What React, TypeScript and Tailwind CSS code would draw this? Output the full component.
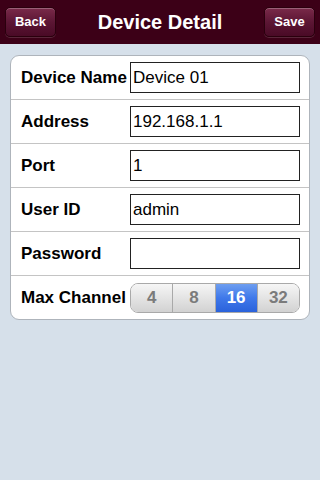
import { useState } from 'react'

const FIELDS = [
  { label: 'Device Name', value: 'Device 01' },
  { label: 'Address', value: '192.168.1.1' },
  { label: 'Port', value: '1' },
  { label: 'User ID', value: 'admin' },
  { label: 'Password', value: '' },
]

const CHANNELS = [4, 8, 16, 32]

function NavButton({ label }: { label: string }) {
  return (
    <button className="h-[30px] w-[51px] rounded-[5px] border border-[#2a000d] bg-gradient-to-b from-[#7a2a4a] via-[#5c1634] to-[#4a0a26] text-[13px] font-bold text-white shadow-[inset_0_1px_0_rgba(255,255,255,0.25),0_1px_0_rgba(255,255,255,0.15)]">
      {label}
    </button>
  )
}

export default function App() {
  const [channel, setChannel] = useState(16)

  return (
    <div className="h-[480px] w-[320px] bg-[#d6e0ea] font-['Liberation_Sans',Arial,sans-serif]">
      {/* Nav bar */}
      <div className="flex h-[44px] items-center justify-between bg-[#3c0017] px-[5px]">
        <NavButton label="Back" />
        <h1 className="text-[20px] font-bold text-white">Device Detail</h1>
        <NavButton label="Save" />
      </div>

      {/* Grouped table */}
      <div className="mx-[10px] mt-[11px] overflow-hidden rounded-[9px] border border-[#aeb4bb] bg-white">
        {FIELDS.map((f) => (
          <div key={f.label} className="flex h-[44px] items-center border-b border-[#c4c4c4] pl-[10px] pr-[9px]">
            <span className="w-[109px] whitespace-nowrap text-[17px] font-bold text-black">{f.label}</span>
            <input
              defaultValue={f.value}
              type={f.label === 'Password' ? 'password' : 'text'}
              className="h-[31px] w-[170px] border border-[#222] bg-white px-[2px] text-[17px] text-black outline-none"
            />
          </div>
        ))}
        <div className="flex h-[43px] items-center pl-[10px] pr-[9px]">
          <span className="w-[109px] whitespace-nowrap text-[17px] font-bold text-black">Max Channel</span>
          <div className="flex h-[30px] w-[170px] overflow-hidden rounded-[8px] border border-[#a9a9a9]">
            {CHANNELS.map((c, i) => (
              <button
                key={c}
                onClick={() => setChannel(c)}
                className={`flex-1 text-[17px] font-bold ${i > 0 ? 'border-l border-[#a9a9a9]' : ''} ${
                  channel === c
                    ? 'border-[#2a5cc0] bg-gradient-to-b from-[#6e9ef0] via-[#3f78ea] to-[#2a62db] text-white'
                    : 'bg-gradient-to-b from-[#f6f6f6] via-[#e4e4e4] to-[#d2d2d2] text-[#7b7b7b]'
                }`}
              >
                {c}
              </button>
            ))}
          </div>
        </div>
      </div>
    </div>
  )
}
